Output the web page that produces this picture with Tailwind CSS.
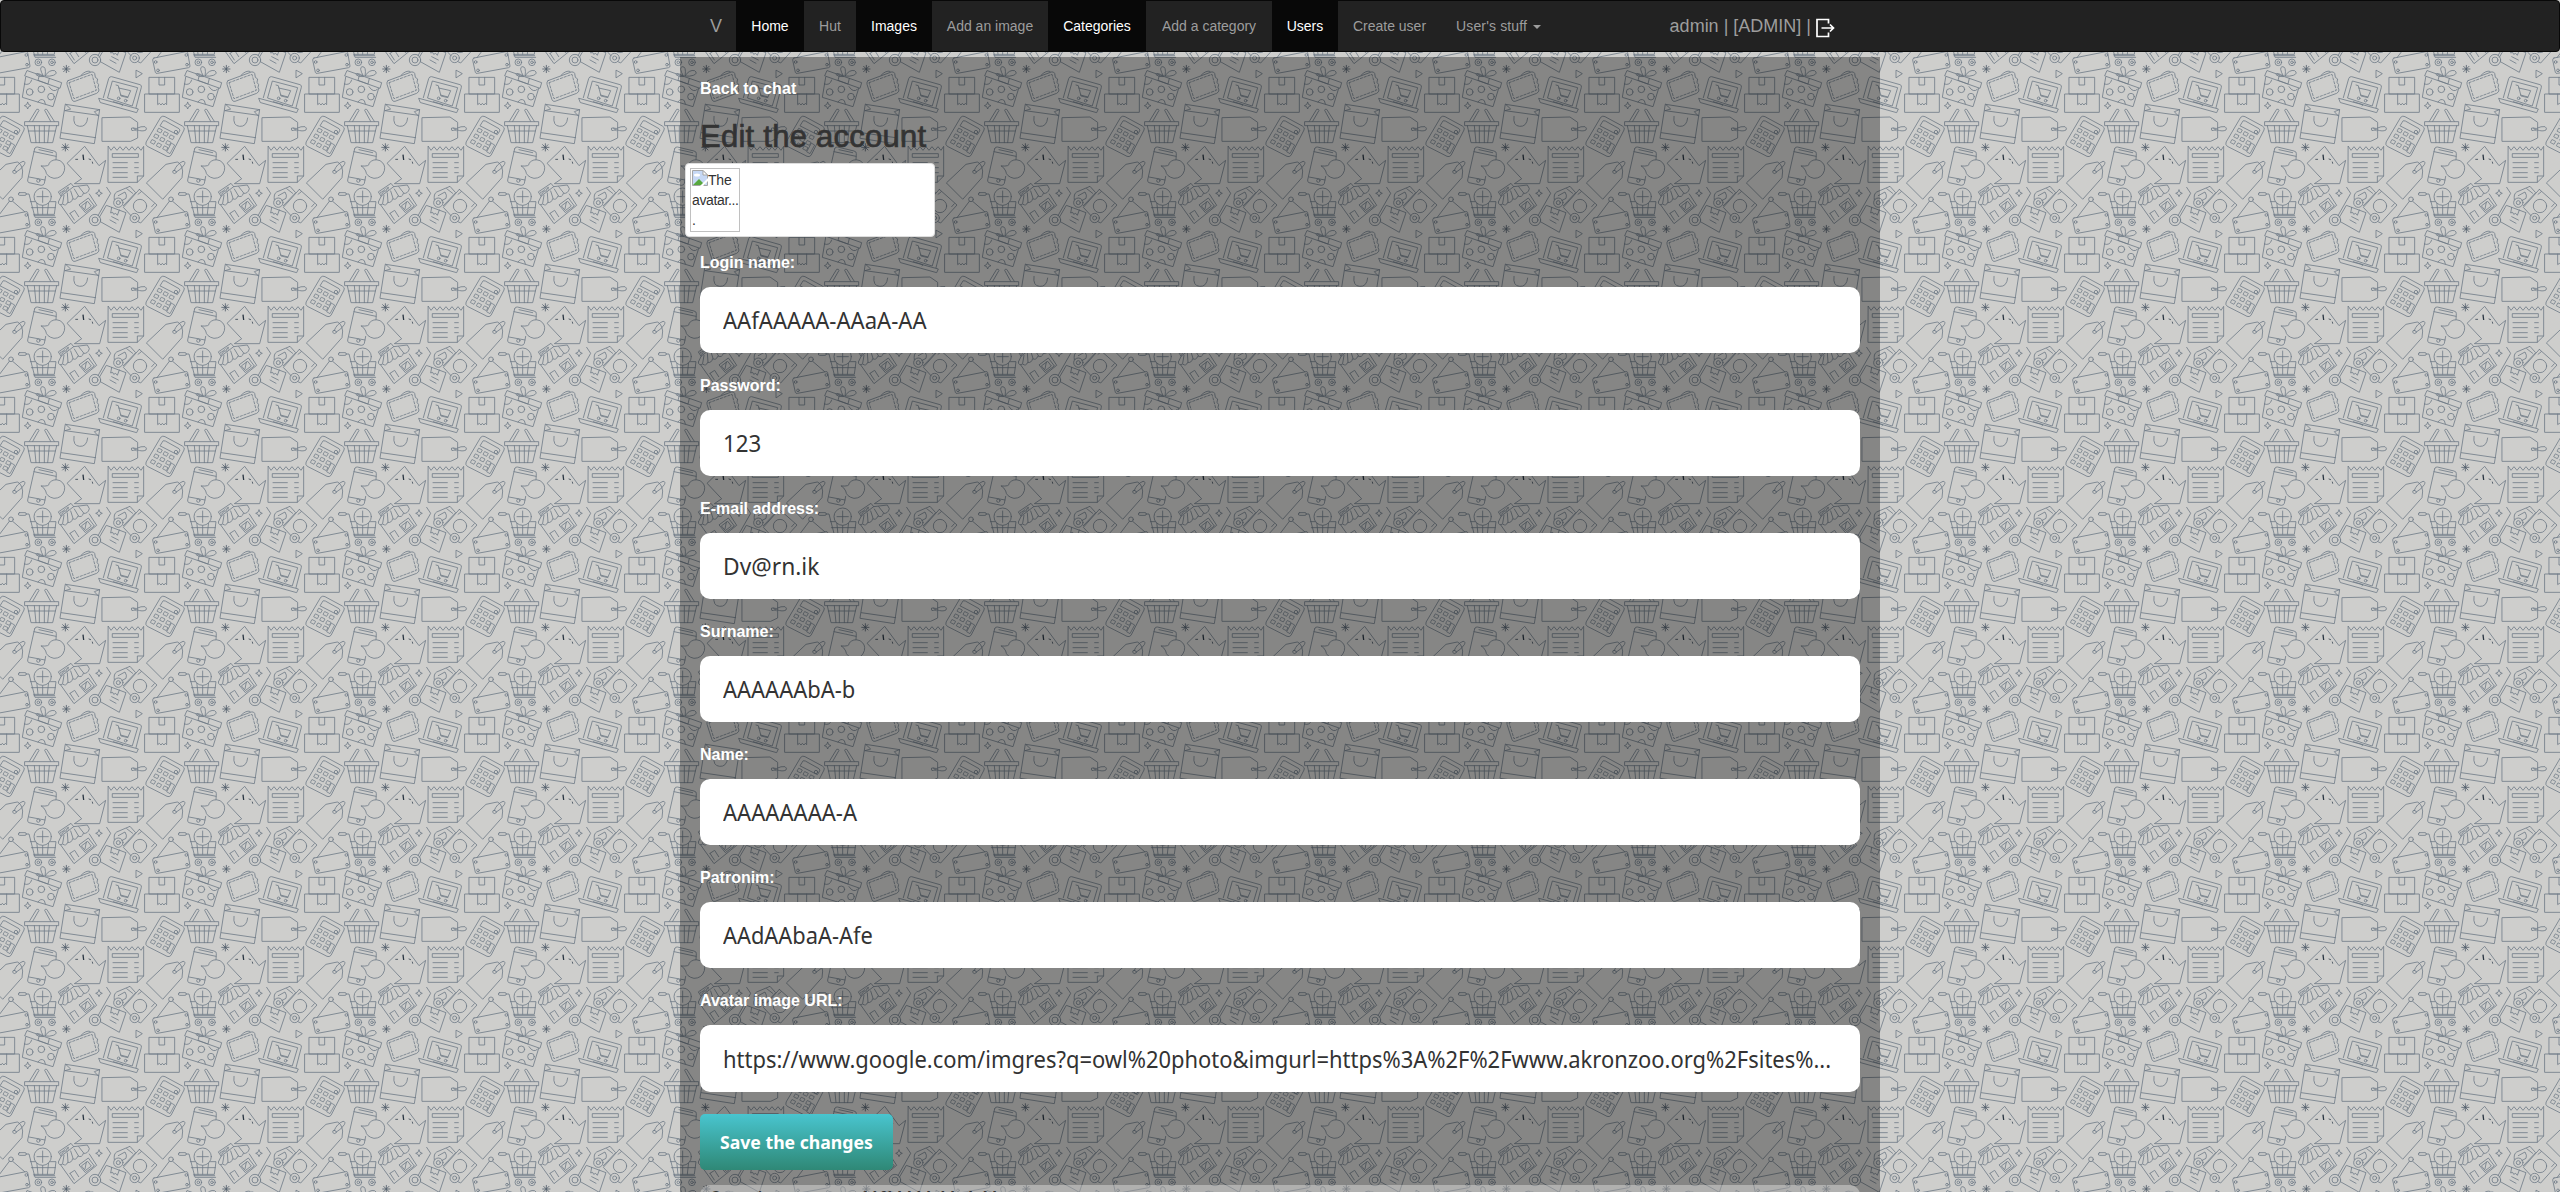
<!DOCTYPE html>
<html lang="en">
<head>
<meta charset="utf-8">
<title>Edit the account</title>
<script src="https://cdn.jsdelivr.net/npm/@tailwindcss/browser@4"></script>
</head>
<body class="relative h-[1192px] overflow-hidden bg-[#cececc] font-['Liberation_Sans',Arial,sans-serif] text-sm leading-5 text-[#333]">
<svg class="absolute inset-0 h-full w-full" aria-hidden="true">
  <defs>
    <g id="motifs" fill="none" stroke="#6c7885" stroke-width="2.4" stroke-linejoin="round" stroke-linecap="round">
      <!-- hanging sign -->
      <circle cx="513" cy="478" r="7"/><path d="M508 484L471 533M518 484L554 515M462 534L558 515Q562 514 563 518L570 558Q570 562 566 563L472 580Q467 581 466 577L458 540Q458 535 462 534Z"/>
      <circle cx="467" cy="546" r="4"/><circle cx="559" cy="525" r="4"/><circle cx="474" cy="571" r="4"/><circle cx="561" cy="554" r="4"/>
      <!-- cart -->
      <rect x="535" y="458" width="24" height="8" rx="4"/><path d="M559 462H567L585 532H647M571 485H648L643 523H581M574 503H646M590 485L594 523M608 496V523M626 485L622 523M582 527H644"/>
      <circle cx="608" cy="470" r="26" fill="#cececc"/><path d="M608 453V487M591 470H625"/>
      <circle cx="595" cy="547" r="10"/><circle cx="595" cy="547" r="4"/><circle cx="636" cy="547" r="10"/><circle cx="636" cy="547" r="4"/>
      <!-- shop -->
      <path d="M656 455L693 430L701 440L664 468ZM664 468L655 486Q656 498 668 492Q678 500 683 487Q694 490 698 476Q708 482 714 468Q726 474 730 460Q744 462 748 446L742 435L701 440M672 466L668 490M682 459L684 486M692 453L699 475M703 447L715 467M716 440L731 459M662 495L702 551L770 496L748 462M690 520L704 511L716 530M690 520L703 540M718 494L745 474L763 498L737 517ZM725 497L743 484L754 498L737 511ZM735 507L739 486"/>
      <text x="0" y="0" transform="translate(664 465) rotate(-36)" font-family="Liberation Sans" font-size="13" font-weight="700" fill="#6c7885" stroke="none" textLength="32" lengthAdjust="spacingAndGlyphs">SHOP</text>
      <!-- sparkles -->
      <path d="M777 450Q778 459 787 460Q778 461 777 470Q776 461 767 460Q776 459 777 450ZM563 667Q564 676 573 677Q564 678 563 687Q562 678 553 677Q562 676 563 667Z"/>
      <path stroke="#4c5967" d="M679 556V578M668 567H690M671 559L687 575M687 559L671 575M676 791V813M665 802H687M668 794L684 810M684 794L668 810"/>
      <!-- hand truck -->
      <path d="M800 442L812 460L774 527M781 545L838 577L858 518L799 496L778 532M815 502L812 519L818 517L821 523L827 520L832 526L838 510M815 530L835 540M810 540L828 550"/>
      <circle cx="765" cy="540" r="17"/><circle cx="765" cy="540" r="9"/>
      <!-- truck -->
      <path d="M823 479Q820 462 830 456L870 439L887 458L850 497M835 467L855 456Q862 466 858 475L845 482M860 446L878 460M898 448L951 495L902 549L894 545M898 448L850 502L874 528M904 455L894 463M943 491L935 500"/>
      <circle cx="900" cy="498" r="20"/><circle cx="835" cy="488" r="14"/><circle cx="835" cy="488" r="6"/><circle cx="884" cy="534" r="14"/><circle cx="884" cy="534" r="6"/>
      <path d="M889 571L907 581L889 593Z"/>
      <!-- gift -->
      <path d="M562 572L665 608L660 625L555 588ZM557 592L547 652L639 680L656 625M598 586L594 601L624 612L628 595M610 588Q596 563 606 560Q620 558 615 588Q628 568 644 572Q655 580 640 586Q630 590 615 588M553 612Q570 618 575 600M627 620Q640 640 652 628M594 666Q602 653 613 662L616 672M610 588Q590 575 588 584Q596 592 610 590"/>
      <circle cx="569" cy="636" r="10"/><circle cx="604" cy="628" r="10"/><circle cx="633" cy="650" r="10"/>
      <!-- wallet -->
      <path d="M684 602L754 576Q761 574 764 580L766 592L773 597L771 607L776 614L774 622L777 630Q777 636 770 640L705 664Q699 666 696 659L681 613Q679 605 684 602ZM723 586Q738 570 750 574"/>
      <path stroke-dasharray="7 5" d="M687 608L756 583L769 631L702 656Z"/>
      <!-- laptop -->
      <path d="M790 653L806 596Q808 589 815 590L900 614Q906 616 904 622L888 683M803 653L817 603L893 623L877 677ZM777 655L895 687L890 698L782 668ZM820 665L849 674L846 678M828 615L835 617L843 648L864 653M836 624L872 632L864 651L842 645"/>
      <circle cx="836" cy="655" r="4"/><circle cx="857" cy="662" r="4"/>
      <!-- boxes -->
      <path d="M928 592H1004V642H928ZM915 642H1018V697H915ZM957 592V615H974V592M953 642V674L958 670L963 675L967 670L972 675L976 670L980 674V642"/>
      <!-- basket -->
      <path d="M555 725H656V737H555ZM562 737L573 788H638L650 737M565 753H646M583 737L588 788M598 737V788M613 737V788M628 737L623 788M568 724L590 688Q596 686 597 691L578 724M632 724L614 691Q615 686 620 688L643 724"/>
      <!-- shopping bag -->
      <path d="M677 673L779 689L763 791L661 775ZM675 692L776 706M664 758L767 773M677 673L692 687L675 692M779 689L763 695L775 708M702 709Q698 738 719 739Q740 741 743 714"/>
      <!-- tag -->
      <path d="M787 713L870 711L893 727V774L872 784H787ZM880 744Q873 742 874 747Q874 754 881 751L890 749Q908 756 918 750Q922 744 915 740Q904 738 890 745ZM880 744L889 752"/>
      <!-- calculator -->
      <path d="M963 711Q968 706 975 710L1027 738Q1036 743 1032 750L993 826Q988 832 981 829L922 799Q915 794 918 787ZM966 727Q968 719 976 723L1017 746Q1022 750 1018 755L1012 764L961 738Z"/>
      <path stroke-width="2.2" d="M957 745l10 5l-5 9l-10-5zM975 755l10 5l-5 9l-10-5zM993 765l10 5l-5 9l-10-5zM947 762l10 5l-5 9l-10-5zM965 772l10 5l-5 9l-10-5zM983 782l10 5l-5 9l-10-5zM937 779l10 5l-5 9l-10-5zM955 789l10 5l-5 9l-10-5zM974 798l10 5l-5 9l-10-5zM995 790l9 5l-14 26l-9-5z"/>
      <circle cx="1008" cy="756" r="5"/>
      <!-- phone and chat bubble -->
      <path d="M584 806Q586 800 592 801L642 813Q650 815 649 821L648 839M584 806L563 900Q562 906 567 908L604 916Q611 916 613 910L617 889M582 815L648 829M567 891L615 900M597 809L638 818M604 858Q630 860 627 850Q640 834 660 842Q678 853 673 872Q666 895 642 895Q619 890 617 873Q612 862 604 858Z"/>
      <circle cx="595" cy="902" r="5"/>
      <!-- parcel -->
      <path d="M682 849L734 799L777 857L797 841L779 911H703L724 897Z"/><path stroke="#26323f" stroke-width="4" stroke-linecap="butt" d="M729 824L731 840"/><path stroke="#35424f" d="M707 838H713M747 837L752 839M757 846L758 850"/>
      <!-- receipt -->
      <path d="M805 799L813 811L822 800L831 811L840 800L849 811L858 800L867 811L876 800L885 811L894 800L903 811L911 799V888L892 907H805ZM892 907V888H911M818 821H895V832H818ZM819 848H862M884 848H895M819 863H862M884 863H895M819 878H862M884 878H895M819 892H862"/>
      <!-- price tag -->
      <path d="M920 908L978 853L1012 846Q1024 850 1028 873L1026 893L969 957ZM1003 871Q1010 872 1009 878Q1002 884 998 877Q997 870 1003 871ZM1003 871Q1010 852 1029 844Q1038 844 1033 854Q1024 868 1009 876"/>
    </g>
    <pattern id="tile" x="0" y="0" width="160" height="160" patternUnits="userSpaceOnUse" patternTransform="translate(0 40)">
      <g transform="scale(.3333333)">
        <use href="#motifs" transform="translate(-960 -960)"/><use href="#motifs" transform="translate(-480 -960)"/><use href="#motifs" transform="translate(0 -960)"/>
        <use href="#motifs" transform="translate(-960 -480)"/><use href="#motifs" transform="translate(-480 -480)"/><use href="#motifs" transform="translate(0 -480)"/>
        <use href="#motifs" transform="translate(-960 0)"/><use href="#motifs" transform="translate(-480 0)"/><use href="#motifs"/>
      </g>
    </pattern>
  </defs>
  <rect width="100%" height="100%" fill="url(#tile)"/>
</svg>

<div class="relative flex flex-col">
  <nav class="h-[52px] rounded border border-[#080808] bg-[#222]">
    <div class="mx-auto flex h-[50px] w-[1170px] items-stretch text-[#9d9d9d]">
      <a class="w-[41px] pl-[15px] pt-[15px] text-lg leading-5">V</a>
      <a class="w-[68px] bg-[#080808] py-[15px] text-center text-white">Home</a>
      <a class="w-[52px] py-[15px] text-center">Hut</a>
      <a class="w-[76px] bg-[#080808] py-[15px] text-center text-white">Images</a>
      <a class="w-[116px] py-[15px] text-center">Add an image</a>
      <a class="w-[98px] bg-[#080808] py-[15px] text-center text-white">Categories</a>
      <a class="w-[126px] py-[15px] text-center">Add a category</a>
      <a class="w-[66px] bg-[#080808] py-[15px] text-center text-white">Users</a>
      <a class="w-[103px] py-[15px] text-center">Create user</a>
      <a class="flex w-[115px] items-center whitespace-nowrap pl-[15px] tracking-[.15px]">User's stuff<span class="ml-[6px] mt-[2px] border-x-4 border-t-4 border-x-transparent border-t-[#9d9d9d]"></span></a>
      <div class="ml-auto mr-[30px] flex items-center whitespace-pre text-lg leading-5">admin | [ADMIN] | <svg class="-ml-px mt-[3px] h-[20px] w-[20px]" viewBox="0 0 20 20" fill="none" stroke="#fff" stroke-width="1.7"><path d="M13.5 5.5V1.5H2V18.5H13.5V14.5M6.5 10H18M15 6.500L18.500 10L15 13.500"/></svg></div>
    </div>
  </nav>

  <main class="mx-auto mt-[5px] flex h-[1135px] w-[1200px] flex-col overflow-hidden bg-black/35 px-5">
    <a class="mt-[21px] h-[22px] shrink-0 text-base leading-[22px] font-bold tracking-[.1px] text-white">Back to chat</a>
    <h1 class="mt-[20px] h-[33px] shrink-0 text-[31px] leading-[33px] font-normal tracking-[.25px] [-webkit-text-stroke:0.7px_#333]">Edit the account</h1>
    <div class="-ml-[15px] mt-[10px] h-[74px] w-[250px] shrink-0 rounded border border-[#ddd] bg-white p-1">
      <div class="h-[64px] w-[50px] border border-[#c0c0c0] p-px">
        <div class="flex"><svg class="h-4 w-4 shrink-0" viewBox="0 0 16 16"><path d="M.5 .5H11L15.500 5V15.500H.5Z" fill="#c6d8f5" stroke="#a5a5a5"/><path d="M1 15L7 9L13 15Z" fill="#57a83e"/><ellipse cx="5" cy="5" rx="3" ry="1.500" fill="#fff"/><path d="M8 16L16 8V11L11 16Z" fill="#fff"/><path d="M11 .5V5H15.500Z" fill="#fff" stroke="#a5a5a5"/></svg><span class="tracking-[-.2px]">The</span></div>
        <div class="whitespace-nowrap tracking-[-.35px]">avatar...</div><div>.</div>
      </div>
    </div>

    <label class="mt-[15px] h-[35px] shrink-0 text-base leading-[22px] font-bold text-white">Login name:</label>
    <div class="flex h-[66px] shrink-0 items-center rounded-[10px] bg-white pl-[23px] font-['Noto_Sans',sans-serif] text-2xl text-[#333]"><span class="origin-left scale-x-[.92] whitespace-nowrap">AAfAAAAA-AAaA-AA</span></div>
    <label class="mt-[22px] h-[35px] shrink-0 text-base leading-[22px] font-bold text-white">Password:</label>
    <div class="flex h-[66px] shrink-0 items-center rounded-[10px] bg-white pl-[23px] font-['Noto_Sans',sans-serif] text-2xl text-[#333]"><span class="origin-left scale-x-[.93] whitespace-nowrap">123</span></div>
    <label class="mt-[22px] h-[35px] shrink-0 text-base leading-[22px] font-bold text-white">E-mail address:</label>
    <div class="flex h-[66px] shrink-0 items-center rounded-[10px] bg-white pl-[23px] font-['Noto_Sans',sans-serif] text-2xl text-[#333]"><span class="origin-left scale-x-[.95] whitespace-nowrap">Dv@rn.ik</span></div>
    <label class="mt-[22px] h-[35px] shrink-0 text-base leading-[22px] font-bold text-white">Surname:</label>
    <div class="flex h-[66px] shrink-0 items-center rounded-[10px] bg-white pl-[23px] font-['Noto_Sans',sans-serif] text-2xl text-[#333]"><span class="origin-left scale-x-[.915] whitespace-nowrap">AAAAAAbA-b</span></div>
    <label class="mt-[22px] h-[35px] shrink-0 text-base leading-[22px] font-bold text-white">Name:</label>
    <div class="flex h-[66px] shrink-0 items-center rounded-[10px] bg-white pl-[23px] font-['Noto_Sans',sans-serif] text-2xl text-[#333]"><span class="origin-left scale-x-[.92] whitespace-nowrap">AAAAAAAA-A</span></div>
    <label class="mt-[22px] h-[35px] shrink-0 text-base leading-[22px] font-bold text-white">Patronim:</label>
    <div class="flex h-[66px] shrink-0 items-center rounded-[10px] bg-white pl-[23px] font-['Noto_Sans',sans-serif] text-2xl text-[#333]"><span class="origin-left scale-x-[.91] whitespace-nowrap">AAdAAbaA-Afe</span></div>
    <label class="mt-[22px] h-[35px] shrink-0 text-base leading-[22px] font-bold text-white">Avatar image URL:</label>
    <div class="flex h-[67px] shrink-0 items-center rounded-[10px] bg-white pl-[23px] font-['Noto_Sans',sans-serif] text-2xl text-[#333]"><span class="origin-left scale-x-[.914] whitespace-nowrap">https://www.google.com/imgres?q=owl%20photo&amp;imgurl=https%3A%2F%2Fwww.akronzoo.org%2Fsites%...</span></div>

    <button class="mt-[22px] flex h-[56px] w-[193px] shrink-0 items-center rounded-[5px] bg-linear-to-b from-[#49c5cf] to-[#2f8876] pl-5 font-['Noto_Sans',sans-serif] text-lg font-bold text-white"><span class="origin-left scale-x-[.98] whitespace-nowrap">Save the changes</span></button>
    <div class="mt-[15px] h-[60px] shrink-0 rounded-[10px] bg-white/35 pl-[10px] pt-[1px] font-['Noto_Sans',sans-serif] text-base leading-[22px] font-semibold"><span class="inline-block origin-left scale-x-[.9] whitespace-nowrap">Control over account AAfAAAAA-AAaA-AA</span></div>
  </main>
</div>
</body>
</html>
